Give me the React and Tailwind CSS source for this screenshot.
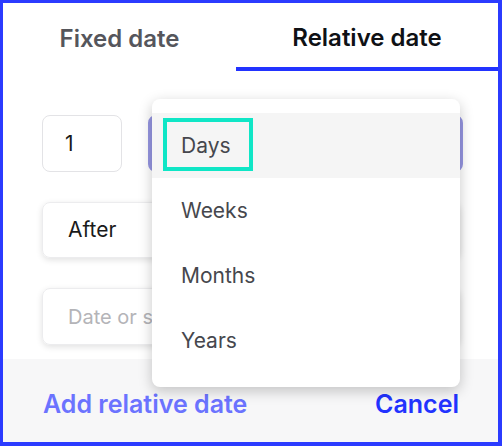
const items = ['Days', 'Weeks', 'Months', 'Years'];

export default function App() {
  return (
    <div
      className="relative w-[502px] h-[446px] bg-white border-[#2b3bff] border-t-[3px] border-l-[3px] border-r-4 border-b-4 flex flex-col overflow-hidden"
      style={{ fontFamily: 'Inter, "Noto Sans", sans-serif' }}
    >
      {/* Tabs */}
      <div className="flex h-[68px] shrink-0">
        <div className="w-[233px] flex items-center justify-center pt-[3px] text-[24px] font-semibold text-[#55565c]">
          Fixed date
        </div>
        <div className="flex-1 flex items-center justify-center pt-[6px] text-[24px] font-semibold text-[#0f1115] border-b-4 border-[#2233ff]">
          Relative date
        </div>
      </div>

      {/* Form */}
      <div className="flex-1 pl-[39px] pr-[35px] pt-[44px] flex flex-col gap-[30px]">
        <div className="flex gap-[26px] h-[57px]">
          <div className="w-[80px] rounded-lg border border-[#e3e3e6] flex items-center pl-[22px] text-[21px] text-[#1a1a1a]">
            1
          </div>
          <div className="flex-1 rounded-lg border-4 border-[#9696e2] bg-white" />
        </div>
        <div className="h-[56px] mr-[3px] rounded-lg border border-[#ececee] shadow-[0_2px_6px_rgba(0,0,0,0.12)] flex items-center pl-[25px] text-[21px] text-[#1a1a1a]">
          After
        </div>
        <div className="h-[57px] mr-[3px] rounded-lg border border-[#ececee] shadow-[0_2px_6px_rgba(0,0,0,0.12)] flex items-center pl-[25px] text-[20px] text-[#b4b4b8]">
          Date or start date
        </div>
      </div>

      {/* Footer */}
      <div className="h-[83px] shrink-0 bg-[#f7f7f8] flex items-center justify-between pl-[40px] pr-[39px] pt-[8px] text-[25px] font-semibold">
        <span className="text-[#6b73ff]">Add relative date</span>
        <span className="text-[#2233ff]">Cancel</span>
      </div>

      {/* Dropdown menu */}
      <div className="absolute left-[149px] top-[96px] w-[308px] rounded-lg bg-white py-[14px] shadow-[0_4px_14px_rgba(0,0,0,0.22)]">
        {items.map((item, i) => (
          <div
            key={item}
            className={
              'h-[65px] flex items-center pl-[29px] text-[21px] text-[#46474d] ' +
              (i === 0 ? 'bg-[#f5f5f5]' : '')
            }
          >
            {item}
          </div>
        ))}
        <div className="absolute left-[11px] top-[19px] w-[90px] h-[53px] border-4 border-[#0fe6c6]" />
      </div>
    </div>
  );
}
